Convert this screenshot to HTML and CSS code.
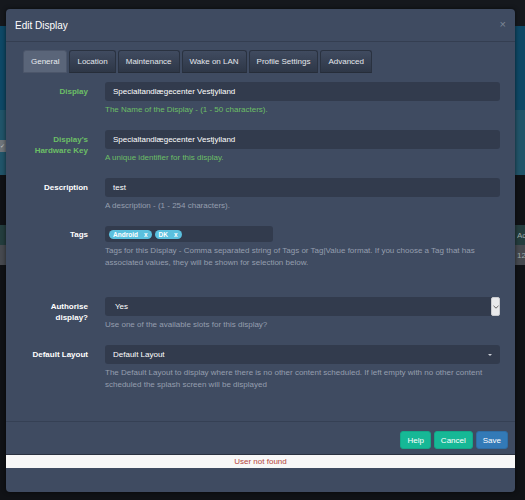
FILE: index.html
```html
<!DOCTYPE html>
<html>
<head>
<meta charset="utf-8">
<link rel="stylesheet" href="styles.css">
</head>
<body>
<div class="page">
  <div class="bg-top"></div>
  <div class="bg-blue"></div>
  <div class="bg-teal"><span class="bg-check">✓</span></div>
  <div class="bg-dark"></div>
  <div class="bg-row1"><span class="bg-text">Ac</span></div>
  <div class="bg-row2"><span class="bg-text">12</span></div>
</div>

<div class="modal">
  <div class="modal-header">
    <span class="modal-title">Edit Display</span>
    <span class="close">×</span>
  </div>
  <div class="modal-body">
    <div class="tabs">
      <div class="tab active">General</div>
      <div class="tab">Location</div>
      <div class="tab">Maintenance</div>
      <div class="tab">Wake on LAN</div>
      <div class="tab">Profile Settings</div>
      <div class="tab">Advanced</div>
    </div>

    <div class="form-group">
      <div class="label success">Display</div>
      <div class="control">
        <div class="input">Specialtandlægecenter Vestjylland</div>
        <div class="help success">The Name of the Display - (1 - 50 characters).</div>
      </div>
    </div>

    <div class="form-group">
      <div class="label success">Display's Hardware Key</div>
      <div class="control">
        <div class="input">Specialtandlægecenter Vestjylland</div>
        <div class="help success">A unique identifier for this display.</div>
      </div>
    </div>

    <div class="form-group">
      <div class="label">Description</div>
      <div class="control">
        <div class="input">test</div>
        <div class="help">A description - (1 - 254 characters).</div>
      </div>
    </div>

    <div class="form-group tags-group">
      <div class="label tags-label">Tags</div>
      <div class="control">
        <div class="tags-input">
          <span class="chip">Android<span class="chip-x">x</span></span>
          <span class="chip">DK<span class="chip-x">x</span></span>
        </div>
        <div class="help">Tags for this Display - Comma separated string of Tags or Tag|Value format. If you choose a Tag that has associated values, they will be shown for selection below.</div>
      </div>
    </div>

    <div class="form-group">
      <div class="label">Authorise display?</div>
      <div class="control">
        <div class="input select-native">
          <span class="select-text">Yes</span>
          <span class="native-btn"><svg width="6" height="4" viewBox="0 0 6 4"><path d="M0.5 0.8 L3 3.2 L5.5 0.8" fill="none" stroke="#555" stroke-width="0.9"/></svg></span>
        </div>
        <div class="help">Use one of the available slots for this display?</div>
      </div>
    </div>

    <div class="form-group last">
      <div class="label">Default Layout</div>
      <div class="control">
        <div class="input select">
          <span>Default Layout</span>
          <span class="caret"></span>
        </div>
        <div class="help">The Default Layout to display where there is no other content scheduled. If left empty with no other content scheduled the splash screen will be displayed</div>
      </div>
    </div>
  </div>
  <div class="modal-footer">
    <div class="buttons">
      <button class="btn btn-teal">Help</button>
      <button class="btn btn-teal">Cancel</button>
      <button class="btn btn-blue">Save</button>
    </div>
    <div class="status-bar">User not found</div>
  </div>
</div>
</body>
</html>
```

FILE: styles.css
```css
* { box-sizing: border-box; }

html, body {
  margin: 0;
  padding: 0;
}

body {
  width: 525px;
  height: 500px;
  overflow: hidden;
  background: #101216;
  font-family: "Liberation Sans", Arial, sans-serif;
  font-size: 8px;
  color: #ffffff;
  position: relative;
}

/* background page (behind the modal backdrop) */
.page {
  display: flex;
  flex-direction: column;
}
.bg-top { height: 26px; background: #15181d; }
.bg-blue { height: 84px; background: #0e4866; }
.bg-teal {
  height: 65px;
  background: #215469;
  display: flex;
  align-items: flex-start;
  padding-top: 30px;
}
.bg-check {
  display: block;
  width: 6px;
  height: 12px;
  background: #6f7479;
  color: #c8c8c8;
  font-size: 6px;
  line-height: 12px;
  overflow: hidden;
}
.bg-dark { height: 50px; background: #101216; }
.bg-row1 {
  height: 20px;
  background: #243d3e;
  display: flex;
  justify-content: flex-end;
  align-items: center;
}
.bg-row2 {
  height: 20px;
  background: #46494f;
  display: flex;
  justify-content: flex-end;
  align-items: center;
}
.bg-text {
  width: 8px;
  overflow: hidden;
  white-space: nowrap;
  color: #9aa6a8;
  font-size: 8px;
}

/* modal */
.modal {
  position: absolute;
  left: 6px;
  top: 9px;
  width: 509px;
  height: 483px;
  background: #3f4b61;
  border-radius: 4px;
  box-shadow: 0 0 4px rgba(0, 0, 0, 0.6);
  display: flex;
  flex-direction: column;
}

.modal-header {
  height: 33px;
  border-bottom: 1px solid #343e51;
  display: flex;
  align-items: center;
  justify-content: space-between;
  padding: 0 9px 0 9px;
}
.modal-title {
  font-size: 10px;
  color: #ffffff;
}
.close {
  font-size: 11px;
  color: #7d8696;
  line-height: 1;
  margin-top: -2px;
}

.modal-body {
  padding: 8px 15px 0 17px;
  height: 379px;
}

.tabs {
  display: flex;
  gap: 2px;
  margin-bottom: 9px;
}
.tab {
  height: 23px;
  padding: 0 7px;
  display: flex;
  align-items: center;
  color: #e4e7ec;
  background: linear-gradient(#404b60, #2e3747);
  border: 1px solid #2a3240;
  border-bottom-color: #262d39;
  border-radius: 3px 3px 0 0;
}
.tab.active {
  background: #5a6579;
  border-color: #4c566a;
  color: #e9ecf0;
}

.form-group {
  display: grid;
  grid-template-columns: 65px 1fr;
  column-gap: 17px;
  margin-bottom: 14px;
}
.form-group.tags-group { margin-bottom: 28px; }
.form-group.last { margin-bottom: 0; }

.label {
  font-weight: bold;
  text-align: right;
  line-height: 11px;
  padding-top: 4px;
  color: #ffffff;
}
.label.tags-label { padding-top: 3px; }
.success { color: #6cbf66; }

.input {
  height: 19px;
  background: #323b4d;
  border-radius: 3px;
  padding: 0 8px;
  display: flex;
  align-items: center;
  color: #ffffff;
}

.help {
  margin-top: 3px;
  line-height: 12px;
  color: #959eae;
}
.help.success { color: #6cbf66; }

.tags-input {
  width: 168px;
  height: 16px;
  background: #323b4d;
  border-radius: 3px;
  padding: 0 4px;
  display: flex;
  align-items: center;
  gap: 3px;
}
.chip {
  height: 9px;
  border-radius: 5px;
  background: #5bc0de;
  color: #ffffff;
  font-size: 6.5px;
  font-weight: bold;
  padding: 0 4px;
  display: flex;
  align-items: center;
  line-height: 9px;
}
.chip-x {
  margin-left: 6px;
  font-weight: bold;
}

.select-native {
  padding: 0 0 0 10px;
  justify-content: space-between;
}
.native-btn {
  width: 9px;
  height: 19px;
  background: #e9eaec;
  border: 1px solid #c9cbcf;
  border-radius: 2px;
  display: flex;
  align-items: center;
  justify-content: center;
}

.select {
  justify-content: space-between;
}
.caret {
  width: 0;
  height: 0;
  border-left: 2.5px solid transparent;
  border-right: 2.5px solid transparent;
  border-top: 2.5px solid #c9ced6;
  margin-right: 0;
}

.modal-footer {
  border-top: 1px solid #354054;
  flex: 1;
  display: flex;
  flex-direction: column;
}
.buttons {
  display: flex;
  justify-content: flex-end;
  gap: 3px;
  padding: 9px 7px 0 0;
}
.btn {
  height: 18px;
  padding: 0 6px;
  font-family: "Liberation Sans", Arial, sans-serif;
  font-size: 8px;
  color: #ffffff;
  border-radius: 3px;
  border: 1px solid transparent;
  cursor: pointer;
}
.btn-teal {
  background: #16b896;
  border-color: #13a888;
}
.btn-blue {
  background: #337ab7;
  border-color: #2e6da4;
}

.status-bar {
  margin-top: 5px;
  height: 14px;
  background: #f7f7f7;
  border-top: 1px solid #2a3140;
  color: #b5443c;
  text-align: center;
  line-height: 13px;
  font-size: 8px;
}
```
